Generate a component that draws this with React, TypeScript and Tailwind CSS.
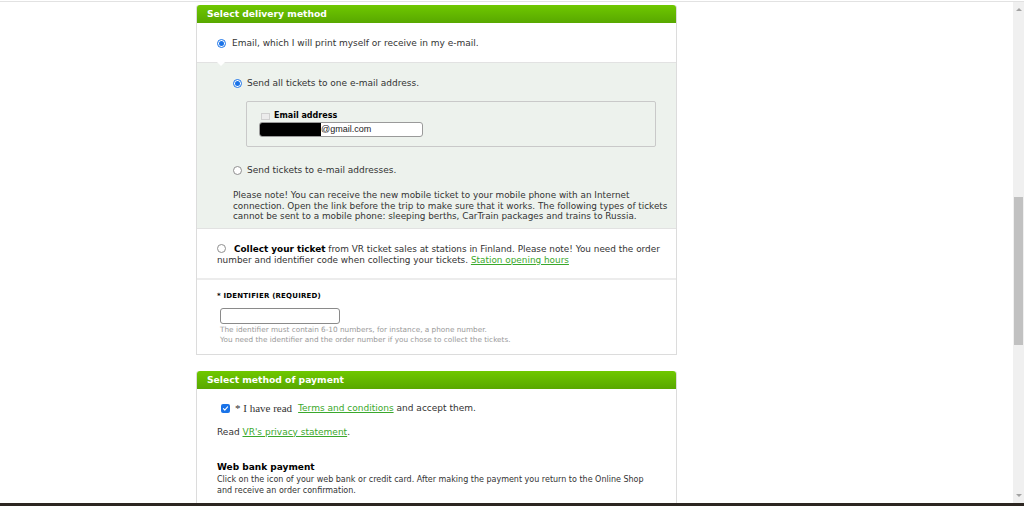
import React from "react";

const sans = "font-['DejaVu_Sans',Verdana,sans-serif]";

function Radio({ checked = false }: { checked?: boolean }) {
  return checked ? (
    <span className="flex h-[9px] w-[9px] shrink-0 items-center justify-center rounded-full border border-[#1a73e8] bg-white">
      <span className="h-[5px] w-[5px] rounded-full bg-[#1a73e8]" />
    </span>
  ) : (
    <span className="block h-[9px] w-[9px] shrink-0 rounded-full border border-[#8f8f8f] bg-white" />
  );
}

function GreenHeader({ title }: { title: string }) {
  return (
    <div className="flex h-[18px] items-center rounded-t-[3px] bg-gradient-to-b from-[#6fc800] to-[#58a800] pl-[10px] text-[9.2px] font-bold text-white">
      {title}
    </div>
  );
}

function Scrollbar() {
  return (
    <div className="flex w-[11px] shrink-0 flex-col items-center bg-[#f0f0f0]">
      <div className="mt-[6px] h-0 w-0 border-x-[3px] border-b-[3px] border-x-transparent border-b-[#a3a3a3]" />
      <div className="h-[186px]" />
      <div className="h-[148px] w-[9px] bg-[#c1c1c1]" />
      <div className="flex-1" />
      <div className="mb-[6px] h-0 w-0 border-x-[3px] border-t-[3px] border-x-transparent border-t-[#a3a3a3]" />
    </div>
  );
}

export default function App() {
  return (
    <div className={`flex h-[506px] w-[1024px] flex-col overflow-hidden bg-white text-[#333] ${sans}`}>
      <div className="h-[2px] shrink-0 border-b border-[#e2e2e2]" />
      <div className="flex min-h-0 flex-1">
        <div className="min-w-0 flex-1 overflow-hidden pl-[196px]">
          {/* delivery card */}
          <div className="mt-[3px] w-[481px] rounded-t-[3px] border border-t-0 border-[#dcdcdc]">
            <GreenHeader title="Select delivery method" />
            <div className="flex h-[39px] items-center gap-[6px] pl-[20px] pt-[2px] text-[9px]">
              <Radio checked />
              <span>Email, which I will print myself or receive in my e-mail.</span>
            </div>
            <div className="relative border-t border-[#e2e2e2] bg-[#edf2ed] pb-[6px]">
              <div className="absolute -top-px left-[20px] h-0 w-0 border-x-[4px] border-t-[4px] border-x-transparent border-t-white" />
              <div className="flex h-[38px] items-center gap-[5px] pl-[36px] pt-[3px] text-[9px]">
                <Radio checked />
                <span>Send all tickets to one e-mail address.</span>
              </div>
              <div className="ml-[49px] h-[46px] w-[410px] rounded-[2px] border border-[#c9c9c9] pl-[12px] pt-[8px]">
                <div className="flex items-center gap-[4px] text-[8px] font-bold text-black">
                  <span className="ml-[2px] h-[7px] w-[9px] border border-[#d0d0d0] bg-[#ececec]" />
                  Email address
                </div>
                <div className="flex h-[15px] w-[164px] items-center overflow-hidden rounded-[3px] border border-[#9a9a9a] bg-white font-['Liberation_Sans',Arial,sans-serif] text-[9px] text-[#222]">
                  <span className="h-full w-[61px] bg-black" />
                  <span>@gmail.com</span>
                </div>
              </div>
              <div className="flex h-[43px] items-center gap-[5px] pl-[36px] pt-[4px] text-[9px]">
                <Radio />
                <span>Send tickets to e-mail addresses.</span>
              </div>
              <p className="pl-[36px] pr-[4px] text-[8.85px] leading-[10.5px]">
                Please note! You can receive the new mobile ticket to your mobile phone with an Internet connection. Open the link before the trip to make sure that it works. The following types of tickets cannot be sent to a mobile phone: sleeping berths, CarTrain packages and trains to Russia.
              </p>
            </div>
            <div className="h-[50px] border-t border-[#e2e2e2] pl-[20px] pr-[10px] pt-[15px] text-[8.9px] leading-[11px]">
              <span className="mr-[8px] inline-flex align-[-1px]">
                <Radio />
              </span>
              <b className="text-black">Collect your ticket</b> from VR ticket sales at stations in Finland. Please note! You need the order number and identifier code when collecting your tickets.{" "}
              <a className="text-[#3aa82c] underline">Station opening hours</a>
            </div>
            <div className="h-[76px] border-t-2 border-[#ececec] pl-[20px] pt-[11px]">
              <div className="text-[7px] font-bold tracking-[0.2px] text-black">* IDENTIFIER (REQUIRED)</div>
              <div className="ml-[3px] mt-[7px] h-[16px] w-[120px] rounded-[3px] border border-[#8a8a8a] bg-white" />
              <div className="ml-[3px] mt-[1px] text-[7.3px] leading-[10px] text-[#9a9a9a]">
                <div>The identifier must contain 6-10 numbers, for instance, a phone number.</div>
                <div>You need the identifier and the order number if you chose to collect the tickets.</div>
              </div>
            </div>
          </div>

          {/* payment card */}
          <div className="mt-[16px] w-[481px] rounded-t-[3px] border border-t-0 border-[#dcdcdc] pb-[20px]">
            <GreenHeader title="Select method of payment" />
            <div className="flex h-[37px] items-center pl-[24px] pt-[3px] text-[9px]">
              <span className="flex h-[9px] w-[9px] items-center justify-center rounded-[2px] bg-[#1a73e8]">
                <svg width="7" height="7" viewBox="0 0 10 10" fill="none">
                  <path d="M2 5.2l2 2 4-4.4" stroke="white" strokeWidth="1.6" strokeLinecap="round" strokeLinejoin="round" />
                </svg>
              </span>
              <span className="ml-[5px] font-['Liberation_Serif','Times_New_Roman',serif] text-[11px]">* I have read</span>
              <a className="ml-[6px] text-[#3aa82c] underline">Terms and conditions</a>
              <span className="ml-[3px]">and accept them.</span>
            </div>
            <div className="pl-[20px] text-[9px] leading-[12px]">
              Read <a className="text-[#3aa82c] underline">VR's privacy statement</a>.
            </div>
            <div className="mt-[23px] pl-[20px] text-[9px] font-bold text-black">Web bank payment</div>
            <p className="mt-[1px] pl-[20px] pr-[24px] text-[8px] leading-[10.5px]">
              Click on the icon of your web bank or credit card. After making the payment you return to the Online Shop and receive an order confirmation.
            </p>
          </div>
        </div>
        <Scrollbar />
      </div>
      <div className="h-[3px] shrink-0 bg-[#2c2621]" />
    </div>
  );
}
